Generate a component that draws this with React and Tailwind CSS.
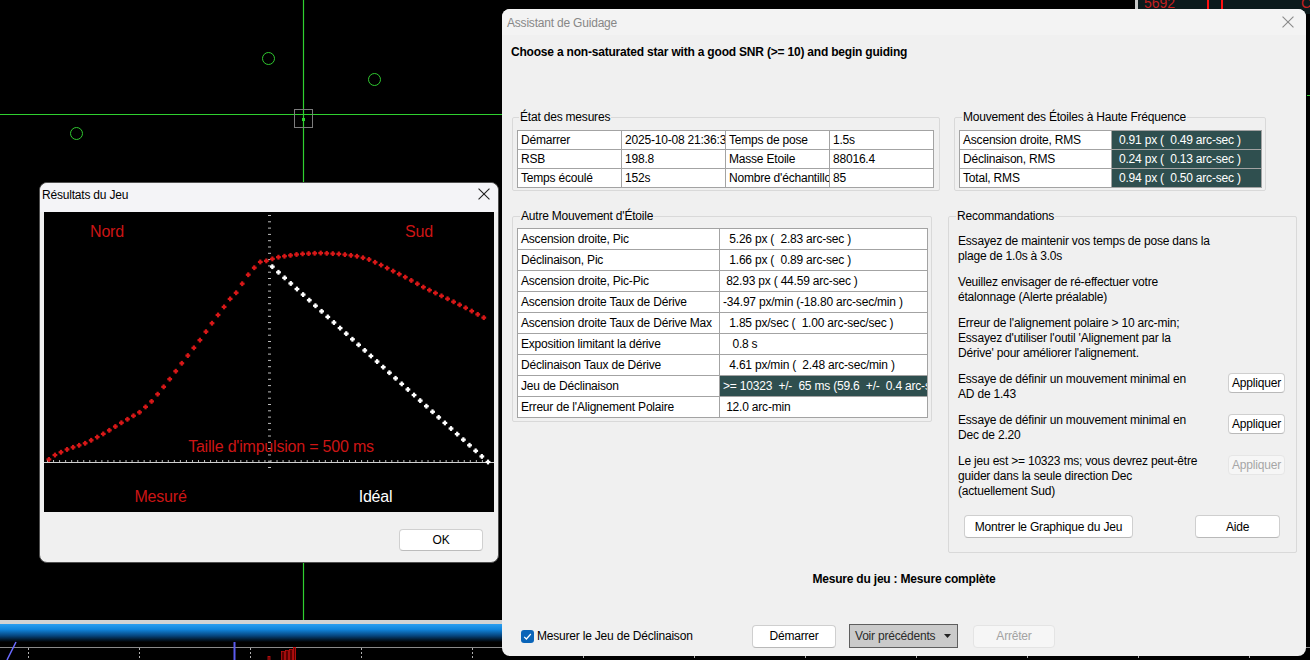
import React from "react";

const redCtrl = [
  [44, 463], [55, 455], [68, 449], [86, 443], [105, 433], [121, 423], [140, 412], [152, 401],
  [166, 384], [182, 363], [200, 340], [215, 319], [230, 299], [236, 293], [242, 284], [248, 275],
  [254, 268], [260, 262], [266, 261], [272, 259], [279, 257], [300, 254], [320, 253], [340, 254],
  [356, 256], [368, 259], [381, 265], [405, 277], [425, 288], [448, 299], [466, 308], [490, 321],
];

function interp(pts, x) {
  for (let i = 0; i < pts.length - 1; i++) {
    const [x0, y0] = pts[i];
    const [x1, y1] = pts[i + 1];
    if (x >= x0 && x <= x1) return y0 + ((y1 - y0) * (x - x0)) / (x1 - x0);
  }
  return pts[pts.length - 1][1];
}

function Plus({ x, y, fill }) {
  return (
    <g fill={fill}>
      <rect x={x - 2.4} y={y - 1.1} width={4.8} height={2.2} />
      <rect x={x - 1.1} y={y - 2.4} width={2.2} height={4.8} />
    </g>
  );
}

function XIcon({ color, size = 11 }) {
  return (
    <svg width={size} height={size} viewBox="0 0 11 11" className="block">
      <path d="M0.5 0.5 L10.5 10.5 M10.5 0.5 L0.5 10.5" stroke={color} strokeWidth="1" fill="none" />
    </svg>
  );
}

function Background() {
  const ticks = [];
  for (let x = 28; x < 1310; x += 111) ticks.push(x);
  return (
    <svg className="absolute left-0 top-0" width="1310" height="660">
      <defs>
        <linearGradient id="band" x1="0" y1="0" x2="0" y2="1">
          <stop offset="0" stopColor="#2c9ff0" />
          <stop offset="0.3" stopColor="#1185dc" />
          <stop offset="0.65" stopColor="#06457e" />
          <stop offset="1" stopColor="#000" />
        </linearGradient>
      </defs>
      <line x1="303.5" y1="0" x2="303.5" y2="620" stroke="#2fd02f" strokeWidth="1.2" />
      <line x1="0" y1="114.5" x2="520" y2="114.5" stroke="#2fd02f" strokeWidth="1.2" />
      <rect x="294.5" y="109.5" width="18" height="18" fill="none" stroke="#7c7c7c" />
      <rect x="302" y="118" width="3" height="3" fill="#2fd02f" />
      <circle cx="268.5" cy="58.5" r="6" fill="none" stroke="#2fc82f" />
      <circle cx="374.5" cy="79.5" r="6" fill="none" stroke="#2fc82f" />
      <circle cx="76.5" cy="133.5" r="6" fill="none" stroke="#2fc82f" />
      <rect x="0" y="620" width="520" height="4" fill="#d3d3d3" />
      <rect x="0" y="624" width="520" height="18" fill="url(#band)" />
      <line x1="0" y1="647.5" x2="1310" y2="647.5" stroke="#8a8a8a" />
      {ticks.map((x) => (
        <line key={x} x1={x + 0.5} y1="648" x2={x + 0.5} y2="660" stroke="#b0b0b0" strokeDasharray="2 2" />
      ))}
      <line x1="16" y1="642" x2="7" y2="660" stroke="#6a6aff" strokeWidth="1.5" />
      <line x1="234.5" y1="642" x2="234.5" y2="660" stroke="#5a5aee" strokeWidth="2" />
      <rect x="268" y="656.5" width="2" height="4" fill="#5a0000" stroke="#c01010" strokeWidth="0.8" />
      <rect x="281.5" y="651.5" width="3" height="9" fill="#5a0000" stroke="#c01010" strokeWidth="0.8" />
      <rect x="285.5" y="650.5" width="3" height="10" fill="#5a0000" stroke="#c01010" strokeWidth="0.8" />
      <rect x="289.5" y="649.5" width="3" height="11" fill="#5a0000" stroke="#c01010" strokeWidth="0.8" />
      <rect x="293.5" y="647.5" width="2" height="13" fill="#5a0000" stroke="#d01010" strokeWidth="0.8" />
      <rect x="1138" y="0" width="172" height="14" fill="#0c1a1c" />
      <rect x="1135" y="0" width="3" height="14" fill="#c8c8c8" />
      <text x="1144" y="8" fill="#c42020" fontSize="14" fontFamily="Liberation Sans, Arial, sans-serif">5692</text>
      <rect x="1207" y="0" width="2" height="14" fill="#ff1010" />
      <rect x="1221" y="0" width="2" height="14" fill="#ff1010" />
      <text x="1301" y="8" fill="#c42020" fontSize="14" fontFamily="Liberation Sans, Arial, sans-serif">C</text>
      <rect x="1307" y="95" width="3" height="1" fill="#2fc82f" />
    </svg>
  );
}

function BacklashChart() {
  const red = [];
  for (let k = -35; k <= 37; k++) {
    const x = 260.3 + 6.04 * k;
    red.push([x, interp(redCtrl, x)]);
  }
  const white = [];
  for (let i = 0; i < 36; i++) {
    white.push([272.3 + (215.7 * i) / 35, 266.7 + (195.3 * i) / 35]);
  }
  const vt = [];
  for (let y = 215; y <= 468; y += 6.3) vt.push(y);
  const ht = [];
  for (let x = 47; x <= 494; x += 6.04) ht.push(x);
  const ff = "Liberation Sans, Arial, sans-serif";
  const red1 = "#cc1515";
  return (
    <svg width="450" height="300" viewBox="44 212 450 300" className="block">
      <rect x="44" y="212" width="450" height="300" fill="#000" />
      {vt.map((y, i) => (
        <rect key={i} x="268" y={y} width="3" height="1" fill="#bdbdbd" />
      ))}
      <rect x="44" y="462" width="450" height="1" fill="#d0d0d0" />
      {ht.map((x, i) => (
        <rect key={i} x={x} y="460" width="1" height="2" fill="#bdbdbd" />
      ))}
      {red.map(([x, y], i) => (
        <Plus key={"r" + i} x={x} y={y} fill="#d81818" />
      ))}
      {white.map(([x, y], i) => (
        <Plus key={"w" + i} x={x} y={y} fill="#ffffff" />
      ))}
      <text x="107" y="237" textAnchor="middle" fill={red1} fontSize="16" fontFamily={ff}>Nord</text>
      <text x="419" y="237" textAnchor="middle" fill={red1} fontSize="16" fontFamily={ff}>Sud</text>
      <text x="281" y="452" textAnchor="middle" fill={red1} fontSize="16" fontFamily={ff}>Taille d'impulsion = 500 ms</text>
      <text x="160.5" y="502" textAnchor="middle" fill={red1} fontSize="16" fontFamily={ff}>Mesuré</text>
      <text x="375.5" y="502" textAnchor="middle" fill="#ffffff" fontSize="16" fontFamily={ff}>Idéal</text>
    </svg>
  );
}

function ResultsDialog() {
  return (
    <div className="absolute left-[39px] top-[182px] w-[460px] h-[381px] bg-[#f0f0f0] border border-[#505050] rounded-[8px] flex flex-col tracking-[-0.2px]">
      <div className="h-[29px] shrink-0 flex items-start justify-between pl-[2px] pr-[8px] pt-[5px] bg-[#f4f4f7] rounded-t-[8px]">
        <span className="leading-[14px] text-[12px] text-black">Résultats du Jeu</span>
        <XIcon color="#222" size={12} />
      </div>
      <div className="ml-[4px]">
        <BacklashChart />
      </div>
      <div className="mt-[17px] flex justify-end pr-[15px]">
        <div className="w-[84px] h-[22px] bg-white border border-[#d0d0d0] border-b-[#bcbcbc] rounded-[4px] flex items-center justify-center text-[12px]">
          OK
        </div>
      </div>
    </div>
  );
}

function Group({ className, legend, legendCls = "ml-[7px]", children }) {
  return (
    <fieldset className={"border border-[#d9d9d9] rounded-[2px] " + className}>
      <legend className={"px-[1px] leading-[14px] text-black " + legendCls}>{legend}</legend>
      {children}
    </fieldset>
  );
}

const cellBase = "border border-[#a3a3a3] p-0 whitespace-pre overflow-hidden text-black";

function Table1() {
  const rows = [
    ["Démarrer", "2025-10-08 21:36:39", "Temps de pose", "1.5s"],
    ["RSB", "198.8", "Masse Etoile", "88016.4"],
    ["Temps écoulé", "152s", "Nombre d'échantillons", "85"],
  ];
  return (
    <table className="border-collapse table-fixed w-[416px] bg-white">
      <colgroup>
        <col className="w-[104px]" />
        <col className="w-[104px]" />
        <col className="w-[104px]" />
        <col className="w-[104px]" />
      </colgroup>
      <tbody>
        {rows.map((r, i) => (
          <tr key={i}>
            {r.map((c, j) => (
              <td key={j} className={cellBase + " h-[19px] leading-[17px] pl-[3px]"}>
                {c}
              </td>
            ))}
          </tr>
        ))}
      </tbody>
    </table>
  );
}

function Table2() {
  const rows = [
    ["Ascension droite, RMS", "0.91 px (  0.49 arc-sec )"],
    ["Déclinaison, RMS", "0.24 px (  0.13 arc-sec )"],
    ["Total, RMS", "0.94 px (  0.50 arc-sec )"],
  ];
  return (
    <table className="border-collapse table-fixed w-[302px] bg-white">
      <colgroup>
        <col className="w-[152px]" />
        <col className="w-[150px]" />
      </colgroup>
      <tbody>
        {rows.map((r, i) => (
          <tr key={i}>
            <td className={cellBase + " h-[19px] leading-[17px] pl-[3px]"}>{r[0]}</td>
            <td className={cellBase + " h-[19px] leading-[17px] pl-[7px] bg-[#2f4f4f] text-white"}>{r[1]}</td>
          </tr>
        ))}
      </tbody>
    </table>
  );
}

function Table3() {
  const rows = [
    ["Ascension droite, Pic", "  5.26 px (  2.83 arc-sec )"],
    ["Déclinaison, Pic", "  1.66 px (  0.89 arc-sec )"],
    ["Ascension droite, Pic-Pic", " 82.93 px ( 44.59 arc-sec )"],
    ["Ascension droite Taux de Dérive", "-34.97 px/min (-18.80 arc-sec/min )"],
    ["Ascension droite Taux de Dérive Max", "  1.85 px/sec (  1.00 arc-sec/sec )"],
    ["Exposition limitant la dérive", "   0.8 s"],
    ["Déclinaison Taux de Dérive", "  4.61 px/min (  2.48 arc-sec/min )"],
    ["Jeu de Déclinaison", ">= 10323  +/-  65 ms (59.6  +/-  0.4 arc-sec)", true],
    ["Erreur de l'Alignement Polaire", " 12.0 arc-min"],
  ];
  return (
    <table className="border-collapse table-fixed w-[410px] bg-white">
      <colgroup>
        <col className="w-[202px]" />
        <col className="w-[208px]" />
      </colgroup>
      <tbody>
        {rows.map((r, i) => (
          <tr key={i}>
            <td className={cellBase + " h-[21px] leading-[19px] pl-[3px]"}>{r[0]}</td>
            <td
              className={
                cellBase +
                " h-[21px] leading-[19px] pl-[3px]" +
                (r[2] ? " bg-[#2f4f4f] text-white" : "")
              }
            >
              {r[1]}
            </td>
          </tr>
        ))}
      </tbody>
    </table>
  );
}

function ApplyBtn({ disabled }) {
  return (
    <div
      className={
        "mt-[1px] w-[57px] h-[20px] shrink-0 rounded-[4px] border flex items-center justify-center text-[12px] " +
        (disabled
          ? "bg-[#f6f6f6] border-[#e6e6e6] text-[#a6a6a6]"
          : "bg-white border-[#cfcfcf] border-b-[#b9b9b9] text-black")
      }
    >
      Appliquer
    </div>
  );
}

function Recommendations() {
  return (
    <div className="pt-[11px] pl-[9px] pr-[11px] pb-[14px]">
      <div className="flex flex-col gap-[11px] leading-[15px]">
        <div className="whitespace-nowrap">
          Essayez de maintenir vos temps de pose dans la
          <br />
          plage de 1.0s à 3.0s
        </div>
        <div className="whitespace-nowrap">
          Veuillez envisager de ré-effectuer votre
          <br />
          étalonnage (Alerte préalable)
        </div>
        <div className="whitespace-nowrap">
          Erreur de l'alignement polaire &gt; 10 arc-min;
          <br />
          Essayez d'utiliser l'outil 'Alignement par la
          <br />
          Dérive' pour améliorer l'alignement.
        </div>
        <div className="flex justify-between items-start">
          <div className="whitespace-nowrap">
            Essaye de définir un mouvement minimal en
            <br />
            AD de 1.43
          </div>
          <ApplyBtn />
        </div>
        <div className="flex justify-between items-start">
          <div className="whitespace-nowrap">
            Essaye de définir un mouvement minimal en
            <br />
            Dec de 2.20
          </div>
          <ApplyBtn />
        </div>
        <div className="flex justify-between items-start">
          <div className="whitespace-nowrap">
            Le jeu est &gt;= 10323 ms; vous devrez peut-être
            <br />
            guider dans la seule direction Dec
            <br />
            (actuellement Sud)
          </div>
          <ApplyBtn disabled />
        </div>
      </div>
      <div className="mt-[16px] flex justify-between pl-[6px] pr-[5px]">
        <div className="w-[169px] h-[23px] bg-white border border-[#cfcfcf] border-b-[#b9b9b9] rounded-[4px] flex items-center justify-center">
          Montrer le Graphique du Jeu
        </div>
        <div className="w-[85px] h-[23px] bg-white border border-[#cfcfcf] border-b-[#b9b9b9] rounded-[4px] flex items-center justify-center">
          Aide
        </div>
      </div>
    </div>
  );
}

function MainDialog() {
  return (
    <div className="absolute left-[502px] top-[9px] w-[804px] h-[647px] bg-[#f0f0f0] rounded-[8px] flex flex-col tracking-[-0.2px] text-[12px] text-black">
      <div className="h-[26px] shrink-0 flex items-center justify-between pl-[5px] pr-[12px] rounded-t-[8px] bg-[#f3f3f3]">
        <span className="text-[#878787] leading-[14px] pt-[1px]">Assistant de Guidage</span>
        <XIcon color="#8a8a8a" size={12} />
      </div>
      <div className="mt-[10px] pl-[9px] font-bold leading-[14px]">
        Choose a non-saturated star with a good SNR (&gt;= 10) and begin guiding
      </div>
      <div className="mt-[51px] flex items-start">
        <Group className="ml-[10px] w-[428px]" legend="État des mesures" legendCls="ml-[6px]">
          <div className="pt-[6px] pl-[4px] pb-[2px]">
            <Table1 />
          </div>
        </Group>
        <Group className="ml-[14px] w-[312px]" legend="Mouvement des Étoiles à Haute Fréquence">
          <div className="pt-[6px] pl-[4px] pb-[2px]">
            <Table2 />
          </div>
        </Group>
      </div>
      <div className="mt-[18px] flex items-start">
        <Group className="ml-[10px] w-[420px]" legend="Autre Mouvement d'Étoile">
          <div className="pt-[5px] pl-[4px] pb-[3px]">
            <Table3 />
          </div>
        </Group>
        <Group className="ml-[16px] w-[349px]" legend="Recommandations">
          <Recommendations />
        </Group>
      </div>
      <div className="mt-[19px] text-center font-bold leading-[14px]">Mesure du jeu : Mesure complète</div>
      <div className="mt-auto mb-[8px] flex items-center pl-[19px]">
        <div className="w-[231px] flex items-center">
          <div className="w-[13px] h-[13px] rounded-[3px] bg-[#0a64b8] flex items-center justify-center">
            <svg width="11" height="11" viewBox="0 0 11 11" className="block">
              <path d="M2.2 5.8 L4.4 8 L8.8 3" stroke="#fff" strokeWidth="1.2" fill="none" />
            </svg>
          </div>
          <span className="ml-[3px] leading-[14px]">Mesurer le Jeu de Déclinaison</span>
        </div>
        <div className="w-[84px] h-[23px] bg-white border border-[#cfcfcf] border-b-[#b9b9b9] rounded-[4px] flex items-center justify-center">
          Démarrer
        </div>
        <div className="ml-[13px] w-[109px] h-[24px] bg-[#cacaca] border border-[#5e5e5e] flex items-center pl-[5px] pr-[6px] justify-between text-[#2a2a2a]">
          <span>Voir précédents</span>
          <svg width="7" height="4" viewBox="0 0 7 4" className="block">
            <path d="M0 0 L7 0 L3.5 4 Z" fill="#222" />
          </svg>
        </div>
        <div className="ml-[15px] w-[82px] h-[23px] bg-[#f6f6f6] border border-[#e4e4e4] rounded-[4px] flex items-center justify-center text-[#a3a3a3]">
          Arrêter
        </div>
      </div>
    </div>
  );
}

export default function App() {
  return (
    <div className="relative w-[1310px] h-[660px] overflow-hidden bg-black font-['Liberation_Sans',Arial,sans-serif] text-[12px] text-black">
      <Background />
      <ResultsDialog />
      <MainDialog />
    </div>
  );
}
